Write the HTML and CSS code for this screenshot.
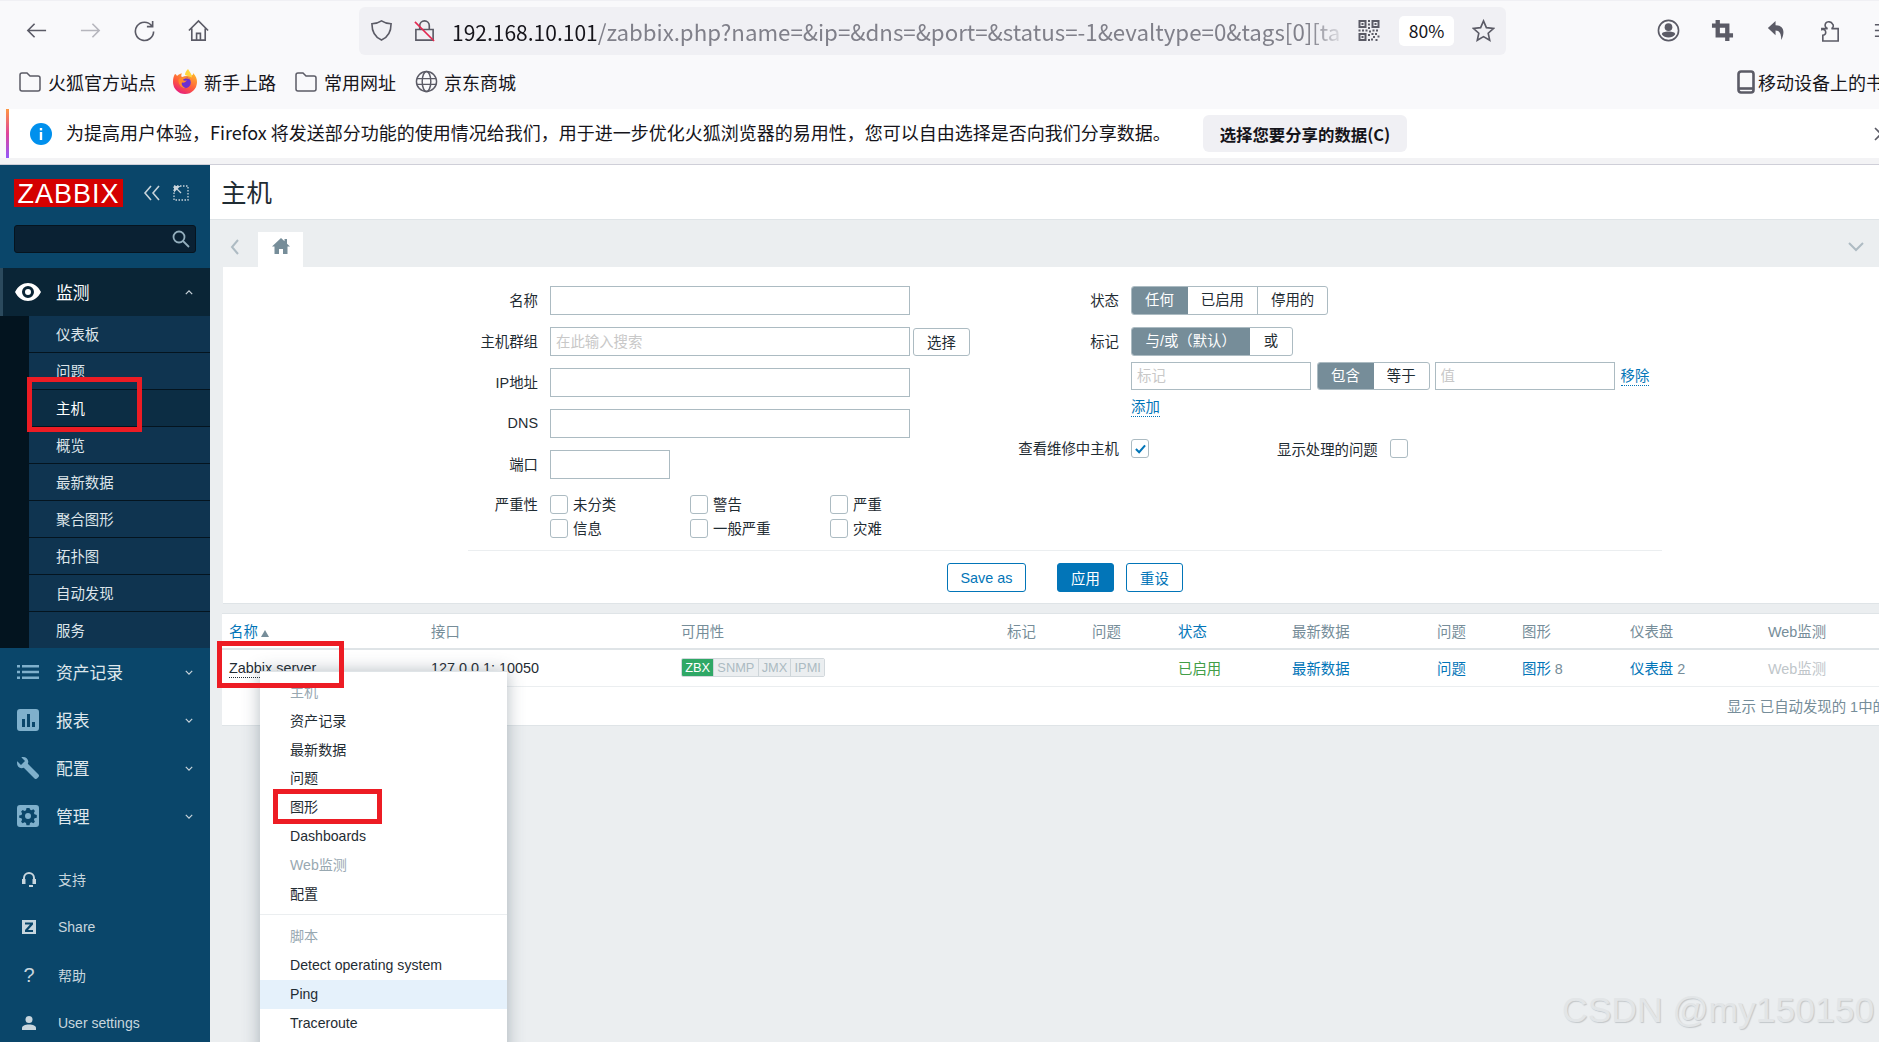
FILE: index.html
```html
<!DOCTYPE html>
<html lang="zh-CN">
<head>
<meta charset="utf-8">
<title>主机</title>
<link rel="stylesheet" href="styles.css">
</head>
<body>
<header class="toolbar">
  <svg class="ti" viewBox="0 0 24 24"><path d="M22 12H3M10 5l-7 7 7 7"/></svg>
  <svg class="ti ti-off" viewBox="0 0 24 24"><path d="M2 12h19M14 5l7 7-7 7"/></svg>
  <svg class="ti" viewBox="0 0 24 24"><path d="M19.5 7A9.5 9.5 0 1 0 21.5 13M20.5 2v6h-6"/></svg>
  <svg class="ti" viewBox="0 0 24 24"><path d="M2 12 12 2l10 10M5 10v12h14V10M10 22v-7h4v7"/></svg>
  <div class="urlbar">
    <svg class="ti" viewBox="0 0 24 24"><path d="M12 2c3 2 6 3 10 3 0 9-3 14-10 17C5 19 2 14 2 5c4 0 7-1 10-3z"/></svg>
    <svg class="ti ti-lock" viewBox="0 0 24 24"><path d="M7 11V7a5 5 0 0 1 10 0v4M3 11h18v11H3z"/><path class="slash" d="M2 3l20 20"/></svg>
    <div class="url"><span class="url-host">192.168.10.101</span>/zabbix.php?name=&amp;ip=&amp;dns=&amp;port=&amp;status=-1&amp;evaltype=0&amp;tags[0][ta</div>
    <svg class="qr" viewBox="0 0 21 21"><path fill-rule="evenodd" d="M0 0h8v8H0zM2 2v4h4V2zM13 0h8v8h-8zM15 2v4h4V2zM0 13h8v8H0zM2 15v4h4v-4zM3 3h2v2H3zM16 3h2v2h-2zM3 16h2v2H3zM9.500 0h2v2h-2zM9.500 3.500h2v2h-2zM9.500 7h2v2h-2zM0 9.500h2v2H0zM3.500 9.500h2v2h-2zM7 9.500h2v2H7zM10.500 10.500h2v2h-2zM14 9.500h2v2h-2zM17.500 9.500h2v2h-2zM9.500 14h2v2h-2zM13 13h2v2h-2zM16.500 13h2v2h-2zM19 15.500h2v2h-2zM14.500 16h2v2h-2zM9.500 19h2v2h-2zM12.500 18.500h2v2h-2zM17 19h2v2h-2z"/></svg>
    <div class="zoompill">80%</div>
    <svg class="ti ti-star" viewBox="0 0 24 24"><path d="M12 2l3 7 7.500 .8-5.600 5 1.600 7.400L12 18.400 5.500 22.200 7.100 14.800 1.500 9.800 9 9z"/></svg>
  </div>
  <svg class="ti ti-acct" viewBox="0 0 24 24"><circle cx="12" cy="12" r="10.500"/><circle class="solid" cx="12" cy="8.500" r="4"/><path class="solid" d="M5 16c0-2 3-3 7-3s7 1 7 3c-3 4.500-11 4.500-14 0z"/></svg>
  <svg class="ti ti-bold" viewBox="0 0 24 24"><path d="M7 1v16h16M1 7h16v16"/></svg>
  <svg class="ti ti-fill" viewBox="0 0 24 24"><path d="M11 2 3 9.500l8 7.500v-5c4 0 6 3 6 10 4-8 3-15.500-6-15.500z"/></svg>
  <svg class="ti" viewBox="0 0 24 24"><path d="M3 10h6a3.500 3.500 0 0 1 2-7 3.500 3.500 0 0 1 3 2 3 3 0 0 1-1 5h7v13H4v-6a3 3 0 0 0 3-3 3 3 0 0 0-4-3z"/></svg>
  <svg class="ti" viewBox="0 0 24 24"><path d="M2 6h20M2 12h20M2 18h20"/></svg>
</header>

<nav class="bookmarks">
  <svg class="bi" viewBox="0 0 22 20"><path d="M1 3a2 2 0 0 1 2-2h5l3 3h8a2 2 0 0 1 2 2v11a2 2 0 0 1-2 2H3a2 2 0 0 1-2-2z"/></svg>
  <span class="bt">火狐官方站点</span>
  <svg class="bi bi-fox" viewBox="0 0 24 25"><defs><linearGradient id="foxg" x1="0.800" y1="0" x2="0.200" y2="1"><stop offset="0" stop-color="#ffb52b"/><stop offset=".55" stop-color="#ff5a3c"/><stop offset="1" stop-color="#e31587"/></linearGradient></defs><path fill="url(#foxg)" d="M2 5c1 0 1.500 1 2 2 2-2 4-2.500 5-2.500-1 1.500-1 3 0 3.500 6-2 12 0 11-4 3 3 4 6 4 9a12 12 0 0 1-24 0C0 10 .5 7 2 5z"/><path class="fox-a" d="M15 0c-2 2-3 4-3 6l7 2.500C19 5 16.500 3 15 0z"/><circle class="fox-b" cx="12" cy="13.500" r="5.800"/><path class="fox-c" d="M5.500 10.500c3-4 9-3.500 11.500 0-3-1.500-6-1-7 .5 1 1 3 1 4 0-1 2-3 3-5 2.500-1 2 1 5 4 5.500-4 1-8-3-7.500-8.500z"/></svg>
  <span class="bt">新手上路</span>
  <svg class="bi bi-3" viewBox="0 0 22 20"><path d="M1 3a2 2 0 0 1 2-2h5l3 3h8a2 2 0 0 1 2 2v11a2 2 0 0 1-2 2H3a2 2 0 0 1-2-2z"/></svg>
  <span class="bt">常用网址</span>
  <svg class="bi bi-4" viewBox="0 0 24 24"><circle cx="12" cy="12" r="10.500"/><ellipse cx="12" cy="12" rx="4.500" ry="10.500"/><path d="M2 9h20M2 15h20"/></svg>
  <span class="bt">京东商城</span>
  <svg class="bi-mobile" viewBox="0 0 18 24"><rect x="1.500" y="1.500" width="15" height="21" rx="2.500"/><path d="M1.500 18.500h15"/></svg>
  <span class="bt bt-mobile">移动设备上的书签</span>
</nav>

<section class="infobar">
  <svg class="info-i" viewBox="0 0 22 22"><circle cx="11" cy="11" r="11"/><rect x="9.800" y="9" width="2.400" height="8" fill="#fff"/><rect x="9.800" y="5" width="2.400" height="2.400" fill="#fff"/></svg>
  <p class="info-text">为提高用户体验，Firefox 将发送部分功能的使用情况给我们，用于进一步优化火狐浏览器的易用性，您可以自由选择是否向我们分享数据。</p>
  <button class="info-btn">选择您要分享的数据(C)</button>
  <svg class="info-x" viewBox="0 0 14 14"><path d="M1 1l12 12M13 1 1 13"/></svg>
</section>
<div class="infogap"></div>

<div class="app">
  <aside class="sidebar">
    <div class="logo-row">
      <div class="logo">ZABBIX</div>
      <svg class="collapse" viewBox="0 0 18 18"><path d="M8 2 2 9l6 7M16 2l-6 7 6 7"/></svg>
      <svg class="expand" viewBox="0 0 16 16"><rect class="dots" x="1" y="1" width="14" height="14"/><path class="arrow" d="M1 1h6.500L1 7.500z"/><path d="M3 3l5 5"/></svg>
    </div>
    <div class="side-search"><svg viewBox="0 0 18 18"><circle cx="7" cy="7" r="5.500"/><path d="M11 11l6 6"/></svg></div>
    <div class="menu-head menu-open">
      <svg class="mi mi-eye" viewBox="0 0 26 18"><path class="white" fill-rule="evenodd" d="M0 9C3 3 8 0 13 0s10 3 13 9c-3 6-8 9-13 9S3 15 0 9zm13 6a6 6 0 1 0 0-12 6 6 0 0 0 0 12zm0-3a3 3 0 1 1 0-6 3 3 0 0 1 0 6z"/></svg>
      <span class="ml ml-on">监测</span>
      <svg class="chev" viewBox="0 0 10 6"><path d="M1 5l4-4 4 4"/></svg>
    </div>
    <ul class="submenu">
      <li>仪表板</li><li>问题</li><li class="sub-on">主机</li><li>概览</li><li>最新数据</li><li>聚合图形</li><li>拓扑图</li><li>自动发现</li><li>服务</li>
    </ul>
    <div class="menu-head">
      <svg class="mi" viewBox="0 0 22 14"><path d="M0 0h3v2.500H0zM5 0h17v2.500H5zM0 5.700h3v2.500H0zM5 5.700h17v2.500H5zM0 11.500h3V14H0zM5 11.500h17V14H5z"/></svg>
      <span class="ml">资产记录</span>
      <svg class="chev" viewBox="0 0 10 6"><path d="M1 1l4 4 4-4"/></svg>
    </div>
    <div class="menu-head">
      <svg class="mi" viewBox="0 0 22 22"><path fill-rule="evenodd" d="M3 0h16a3 3 0 0 1 3 3v16a3 3 0 0 1-3 3H3a3 3 0 0 1-3-3V3a3 3 0 0 1 3-3zm2 10v8h3v-8zm5-5v13h3V5zm5 8v5h3v-5z"/></svg>
      <span class="ml">报表</span>
      <svg class="chev" viewBox="0 0 10 6"><path d="M1 1l4 4 4-4"/></svg>
    </div>
    <div class="menu-head">
      <svg class="mi" viewBox="0 0 22 22"><path d="M6 0c3 0 5 2 5.300 4.500 0 1-.2 1.800-.5 2.300L21.500 17.500c.7.700.7 1.800 0 2.500l-1.500 1.500c-.7.700-1.800.7-2.500 0L6.800 10.800c-.5.300-1.300.5-2.300.5C2 11 0 9 0 6c0-.6.100-1.200.3-1.700L4 8l4-4L4.300.3C4.800.1 5.400 0 6 0z"/></svg>
      <span class="ml">配置</span>
      <svg class="chev" viewBox="0 0 10 6"><path d="M1 1l4 4 4-4"/></svg>
    </div>
    <div class="menu-head">
      <svg class="mi" viewBox="0 0 22 22"><path fill-rule="evenodd" d="M3 0h16a3 3 0 0 1 3 3v16a3 3 0 0 1-3 3H3a3 3 0 0 1-3-3V3a3 3 0 0 1 3-3zm6.500 3-.5 2.200-1.400.7-2-1-1.500 1.600 1 2-.6 1.400-2.300.6v2.200l2.300.6.6 1.400-1 2 1.500 1.600 2-1 1.400.6.500 2.300h3l.5-2.300 1.400-.6 2 1 1.500-1.600-1-2 .6-1.400 2.300-.6V9.900l-2.300-.6-.6-1.400 1-2-1.500-1.600-2 1-1.400-.7L12.500 3zM11 8a3 3 0 1 1 0 6 3 3 0 0 1 0-6z"/></svg>
      <span class="ml">管理</span>
      <svg class="chev" viewBox="0 0 10 6"><path d="M1 1l4 4 4-4"/></svg>
    </div>
    <div class="side-foot">
      <div class="foot-row">
        <svg class="fi" viewBox="0 0 14 16"><path class="ln" d="M2 9V7a5 5 0 0 1 10 0v2"/><path d="M0 8h3.500v5H0zM10.500 8H14v5h-3.500zM7 14h4v2H7z"/></svg>
        <span>支持</span>
      </div>
      <div class="foot-row">
        <svg class="fi" viewBox="0 0 14 14"><path fill-rule="evenodd" d="M0 0h14v14H0zM3 2.500v2h5L3 10v2h8v-2H6l5-5.500v-2z"/></svg>
        <span>Share</span>
      </div>
      <div class="foot-row">
        <span class="fi fi-q">?</span>
        <span>帮助</span>
      </div>
      <div class="foot-row">
        <svg class="fi" viewBox="0 0 14 14"><circle cx="7" cy="3.500" r="3.500"/><path d="M0 14v-2c0-2 3-3.500 7-3.500s7 1.500 7 3.500v2z"/></svg>
        <span>User settings</span>
      </div>
    </div>
  </aside>

  <main class="main">
    <div class="page-head"><h1>主机</h1></div>
    <div class="content">
      <div class="tabs">
        <svg class="tab-prev" viewBox="0 0 10 16"><path d="M8 1 2 8l6 7"/></svg>
        <div class="tab-home"><svg viewBox="0 0 18 16"><path d="M9 0 0 8.500h2.500V16h4.500v-5h4v5h4.500V8.500H18l-3-2.800V1h-2.500v2.300z"/></svg></div>
        <svg class="tab-next" viewBox="0 0 16 10"><path d="M1 1l7 7 7-7"/></svg>
      </div>

      <section class="filter">
        <div class="filter-form">
          <div class="fcol">
            <div class="frow"><label>名称</label><input class="field"></div>
            <div class="frow"><label>主机群组</label><input class="field" placeholder="在此输入搜索"><button class="btn-sel">选择</button></div>
            <div class="frow"><label>IP地址</label><input class="field"></div>
            <div class="frow"><label>DNS</label><input class="field"></div>
            <div class="frow"><label>端口</label><input class="field field-s"></div>
            <div class="frow frow-sev"><label>严重性</label>
              <div class="sev">
                <span class="ck-item"><i class="ck"></i>未分类</span>
                <span class="ck-item"><i class="ck"></i>警告</span>
                <span class="ck-item"><i class="ck"></i>严重</span>
                <span class="ck-item"><i class="ck"></i>信息</span>
                <span class="ck-item"><i class="ck"></i>一般严重</span>
                <span class="ck-item"><i class="ck"></i>灾难</span>
              </div>
            </div>
          </div>
          <div class="fcol fcol-r">
            <div class="frow"><label>状态</label><div class="seg"><span class="on">任何</span><span>已启用</span><span>停用的</span></div></div>
            <div class="frow"><label>标记</label><div class="seg seg-logic"><span class="on">与/或（默认）</span><span>或</span></div></div>
            <div class="frow frow-tag"><label></label>
              <input class="field field-t" placeholder="标记">
              <div class="seg seg-t"><span class="on">包含</span><span>等于</span></div>
              <input class="field field-t" placeholder="值">
              <a class="link link-rm">移除</a>
            </div>
            <div class="frow frow-add"><label></label><a class="link">添加</a></div>
            <div class="frow frow-chk"><label>查看维修中主机</label>
              <i class="ck ck-on"><svg viewBox="0 0 12 10"><path d="M1 5l3.500 3.500L11 1"/></svg></i>
              <span class="chk-label">显示处理的问题</span><i class="ck"></i>
            </div>
          </div>
        </div>
        <div class="filter-foot">
          <button class="btn">Save as</button>
          <button class="btn btn-pri">应用</button>
          <button class="btn">重设</button>
        </div>
      </section>

      <section class="results">
        <div class="grid grid-head">
          <span class="hl">名称<i class="sort"></i></span><span>接口</span><span>可用性</span><span>标记</span><span>问题</span><span class="hl">状态</span><span>最新数据</span><span>问题</span><span>图形</span><span>仪表盘</span><span>Web监测</span>
        </div>
        <div class="grid grid-row">
          <span><a class="host">Zabbix server</a></span>
          <span>127.0.0.1: 10050</span>
          <span class="avail"><b class="zbx">ZBX</b><b>SNMP</b><b>JMX</b><b>IPMI</b></span>
          <span></span><span></span>
          <span class="ok">已启用</span>
          <span class="hl">最新数据</span>
          <span class="hl">问题</span>
          <span><span class="hl">图形</span> <em>8</em></span>
          <span><span class="hl">仪表盘</span> <em>2</em></span>
          <span class="off">Web监测</span>
        </div>
        <div class="paging">显示 已自动发现的 1中的1</div>
      </section>
    </div>
  </main>
</div>

<div class="popup">
  <div class="pi pi-head">主机</div>
  <div class="pi">资产记录</div>
  <div class="pi">最新数据</div>
  <div class="pi">问题</div>
  <div class="pi">图形</div>
  <div class="pi">Dashboards</div>
  <div class="pi pi-head">Web监测</div>
  <div class="pi">配置</div>
  <div class="pi-sep"></div>
  <div class="pi pi-head">脚本</div>
  <div class="pi">Detect operating system</div>
  <div class="pi pi-hover">Ping</div>
  <div class="pi">Traceroute</div>
</div>

<div class="mark mark-host"></div>
<div class="mark mark-server"></div>
<div class="mark mark-graph"></div>
<div class="watermark">CSDN @my150150</div>
</body>
</html>
```

FILE: styles.css
```css
* { box-sizing: border-box; }
html, body { margin: 0; height: 1042px; overflow: hidden; }
body {
  width: 1879px;
  display: flex;
  flex-direction: column;
  background: #f9f9fb;
  color: #1f2c33;
  font-family: "Liberation Sans", "Noto Sans CJK SC", sans-serif;
  font-size: 14.4px;
  position: relative;
}

/* browser toolbar */
.toolbar { height: 60px; flex: none; display: flex; align-items: center; gap: 31px; padding: 6px 0 6px 25px; border-top: 1px solid #f0f0f4; }
.ti { width: 23px; height: 23px; flex: none; fill: none; stroke: #5b5b66; stroke-width: 1.7; }
.ti-off { stroke: #b6b6bd; }
.ti-bold { stroke-width: 4.5; }
.ti-fill { fill: #5b5b66; stroke: none; }
.ti-acct { margin-left: 120px; }
.solid { fill: #5b5b66; stroke: none; }
.urlbar { width: 1147px; height: 48px; flex: none; margin-left: 118px; background: #f0f0f4; border-radius: 6px; display: flex; align-items: center; padding-left: 11px; }
.ti-lock { margin-left: 20px; }
.slash { stroke: #e22850; }
.url { width: 894px; flex: none; margin-left: 16px; white-space: nowrap; overflow: hidden; font: 22.3px "Noto Sans CJK SC", sans-serif; color: #80808a; -webkit-mask-image: linear-gradient(to right, #000 96%, transparent); mask-image: linear-gradient(to right, #000 96%, transparent); }
.url-host { color: #15141a; font-size: 21px; }
.qr { width: 22px; height: 21px; flex: none; margin-left: 12px; fill: #5b5b66; }
.zoompill { width: 55px; height: 30px; flex: none; margin-left: 19px; background: #fff; border-radius: 5px; text-align: center; font: 17.5px/30px "Noto Sans CJK SC", sans-serif; color: #15141a; }
.ti-star { margin-left: 18px; }

/* bookmarks */
.bookmarks { height: 49px; flex: none; display: flex; align-items: center; padding: 0 0 6px 19px; font: 18px "Noto Sans CJK SC", sans-serif; color: #15141a; white-space: nowrap; }
.bi { width: 22px; height: 20px; flex: none; fill: none; stroke: #5b5b66; stroke-width: 1.5; margin-right: 7px; }
.bi-fox { width: 24px; height: 25px; margin-left: 17px; margin-right: 7px; stroke: none; }
.fox-a { fill: #ffd53d; }
.fox-b { fill: #6a2fd0; }
.fox-c { fill: #ff8a2b; }
.bi-3 { margin-left: 19px; }
.bi-4 { width: 23px; height: 23px; margin-left: 19px; margin-right: 6px; }
.bi-mobile { width: 18px; height: 24px; flex: none; margin-left: 1221px; fill: none; stroke: #5b5b66; stroke-width: 2.6; }
.bt { flex: none; }
.bt-mobile { margin-left: 3px; }

/* info bar */
.infobar { height: 49px; flex: none; margin-left: 6px; display: flex; align-items: center; background: #fff; border-left: 3px solid; border-image: linear-gradient(#ff9a3d, #e0439a, #9059ff) 1; font: 18px "Noto Sans CJK SC", sans-serif; color: #15141a; white-space: nowrap; }
.info-i { width: 22px; height: 22px; flex: none; margin-left: 21px; fill: #0090ed; }
.info-text { width: 1137px; flex: none; margin: 0 0 3px 14px; }
.info-btn { width: 204px; height: 37px; flex: none; border: 0; border-radius: 6px; background: #f0f0f4; font: bold 16.4px "Noto Sans CJK SC", sans-serif; color: #15141a; padding: 0; }
.info-x { width: 14px; height: 14px; flex: none; margin-left: 467px; fill: none; stroke: #5b5b66; stroke-width: 1.6; }
.infogap { height: 7px; flex: none; background: #f3f3f5; border-bottom: 1px solid #cfcfd8; }

/* zabbix layout */
.app { flex: 1; min-height: 0; display: flex; background: #ebeef0; }
.sidebar { width: 210px; flex: none; background: #0a466a; color: #f2f2f2; display: flex; flex-direction: column; }
.logo-row { height: 42px; flex: none; padding: 14px 0 0 14px; display: flex; align-items: center; }
.logo { width: 109px; height: 28px; background: #d40000; color: #fff; font-size: 27px; line-height: 30px; text-align: center; letter-spacing: 1px; }
.collapse { width: 18px; height: 18px; flex: none; margin-left: 20px; fill: none; stroke: #c9d4db; stroke-width: 1.6; }
.expand { width: 16px; height: 16px; flex: none; margin-left: 12px; fill: none; stroke: #c9d4db; stroke-width: 1.3; }
.dots { stroke-dasharray: 1.500 1.500; }
.arrow { fill: #c9d4db; stroke: none; }
.side-search { width: 182px; height: 28px; flex: none; margin: 18px 0 15px 14px; background: #0a2133; border: 1px solid #06141f; border-radius: 3px; display: flex; justify-content: flex-end; align-items: center; padding-right: 5px; }
.side-search svg { width: 18px; height: 18px; fill: none; stroke: #93aebd; stroke-width: 1.8; }
.menu-head { height: 48px; flex: none; display: flex; align-items: center; padding-left: 17px; }
.menu-open { background: #0a2536; border-left: 3px solid #2b4a5d; padding-left: 12px; }
.mi { width: 22px; height: 22px; flex: none; fill: #7fb0cc; margin-right: 17px; }
.mi-eye { width: 26px; height: 24px; margin-right: 15px; }
.mi .white { fill: #fff; }
.ml { flex: 1; font-size: 16.8px; color: #dfe7ec; }
.ml-on { color: #fff; }
.chev { width: 8px; height: 5px; flex: none; margin-right: 17px; fill: none; stroke: #c9d4db; stroke-width: 1.5; }
.submenu { list-style: none; margin: 0; padding: 0 0 0 29px; background: #03141f; flex: none; }
.submenu li { height: 37px; padding: 0 0 0 27px; line-height: 39px; background: #0f3450; border-bottom: 1px solid #04141f; color: #dde5ea; overflow: hidden; }
.submenu li:last-child { border-bottom: 0; height: 36px; }
.submenu .sub-on { background: #0c2d44; color: #fff; }
.side-foot { margin-top: 15px; flex: none; }
.foot-row { height: 48px; display: flex; align-items: center; padding-left: 22px; color: #c8d6de; font-size: 14px; }
.fi { width: 14px; height: 16px; flex: none; margin-right: 22px; fill: #c8d6de; }
.fi .ln { fill: none; stroke: #c8d6de; stroke-width: 2; }
.fi-q { font-size: 20px; line-height: 16px; text-align: center; }

.main { flex: 1; min-width: 0; display: flex; flex-direction: column; }
.page-head { height: 55px; flex: none; background: #fff; border-bottom: 1px solid #dfe4e7; padding-left: 11px; }
.page-head h1 { margin: 0; font-size: 25.5px; font-weight: 400; line-height: 56px; }
.content { flex: 1; padding-left: 13px; background: #ebeef0; }
.tabs { height: 47px; display: flex; align-items: flex-end; }
.tab-prev { width: 10px; height: 16px; flex: none; margin: 0 18px 12px 7px; fill: none; stroke: #aebbc3; stroke-width: 2; }
.tab-home { width: 45px; height: 35px; flex: none; background: #fff; display: flex; justify-content: center; padding-top: 6px; }
.tab-home svg { width: 18px; height: 16px; fill: #768d99; }
.tab-next { width: 16px; height: 10px; flex: none; margin: 0 15px 15px auto; fill: none; stroke: #aebbc3; stroke-width: 2; }

/* filter */
.filter { height: 337px; background: #fff; border-bottom: 1px solid #dfe4e7; padding-top: 19px; }
.filter-form { height: 264px; display: flex; }
.fcol { width: 760px; flex: none; }
.fcol-r { width: auto; flex: 1; }
.frow { display: flex; align-items: center; height: 29px; margin-bottom: 12px; white-space: nowrap; }
.frow label { width: 315px; flex: none; text-align: right; padding-bottom: 2px; margin-right: 12px; }
.fcol-r label { width: 136px; }
.field { width: 360px; height: 29px; flex: none; border: 1px solid #acbbc2; background: #fff; padding: 0 5px; margin: 0; font: inherit; border-radius: 0; outline: 0; }
.field::placeholder { color: #c8c8c8; opacity: 1; }
.field-s { width: 120px; }
.field-t { width: 180px; height: 28px; }
.btn-sel { width: 57px; height: 28px; flex: none; margin-left: 3px; background: #fff; border: 1px solid #acbbc2; border-radius: 3px; font: inherit; color: #1f2c33; padding: 0; }
.frow-sev { height: auto; margin-top: 16px; align-items: flex-start; margin-bottom: 0; }
.frow-sev label { margin-top: -2px; }
.sev { display: grid; grid-template-columns: repeat(3, 140px); row-gap: 5px; }
.ck-item { display: flex; align-items: center; height: 19px; padding-bottom: 2px; }
.ck { width: 18px; height: 19px; flex: none; display: flex; align-items: center; justify-content: center; border: 1px solid #acbbc2; border-radius: 3px; margin: 2px 5px 0 0; background: #fff; }
.ck svg { width: 11px; height: 10px; fill: none; stroke: #0275b8; stroke-width: 2.2; }
.seg { display: flex; height: 29px; flex: none; border: 1px solid #acbbc2; border-radius: 3px; overflow: hidden; line-height: 27px; }
.seg span { padding: 0 13px; border-right: 1px solid #acbbc2; }
.seg span:last-child { border-right: 0; }
.seg .on { background: #768d99; color: #fff; border-color: #768d99; }
.seg-logic span { padding: 0 13.500px; }
.seg-t { height: 28px; margin: 0 5px 0 6px; line-height: 26px; }
.link { color: #0275b8; border-bottom: 1px dotted #0275b8; line-height: 18px; }
.link-rm { margin-left: 6px; }
.frow-tag { height: 28px; margin: -6px 0 0; }
.frow-add { height: 18px; margin: 8px 0 0; }
.frow-chk { height: 19px; margin: 23px 0 0; }
.frow-chk .ck { margin: 0; }
.chk-label { margin: 0 12px 0 128px; }
.filter-foot { border-top: 1px solid #ebeef0; margin-left: 245px; width: 1194px; padding: 12px 0 0 479px; display: flex; }
.btn { width: 57px; height: 29px; flex: none; margin-right: 12px; background: #fff; border: 1px solid #0275b8; border-radius: 3px; color: #0275b8; font: inherit; padding: 0; }
.btn:first-child { width: 79px; margin-right: 31px; }
.btn-pri { background: #0275b8; color: #fff; }

/* results */
.results { margin-top: 9px; height: 113px; background: #fff; border-top: 1px solid #dfe4e7; border-bottom: 1px solid #dfe4e7; margin-left: -1px; white-space: nowrap; }
.grid { display: grid; grid-template-columns: 202px 250px 326px 85px 86px 114px 145px 85px 108px 138px 1fr; padding-left: 7px; align-items: center; }
.grid-head { height: 36px; border-bottom: 2px solid #dfe4e7; color: #768d99; padding-bottom: 2px; }
.grid-row { height: 37px; border-bottom: 1px solid #ebeef0; padding-bottom: 1px; }
.hl { color: #0275b8; }
.sort { display: inline-block; width: 0; height: 0; margin-left: 3px; border: 4.500px solid transparent; border-top: 0; border-bottom: 7px solid #768d99; }
.host { border-bottom: 1px dotted #1f2c33; line-height: 17px; display: inline-block; margin-top: 2px; }
.avail { display: flex; width: 144px; height: 19px; border: 1px solid #d2d8dc; border-radius: 2px; overflow: hidden; font-size: 12.8px; }
.avail b { font-weight: 400; background: #ebeef0; color: #acbbc2; line-height: 17px; border-left: 1px solid #cdd5d9; padding: 0 3px; text-align: center; flex: auto; }
.avail .zbx { background: #2fa866; color: #fff; border-left: 0; }
.ok { color: #429e47; }
.off { color: #c0c6ca; }
em { font-style: normal; color: #768d99; }
.paging { padding-left: 1505px; line-height: 41px; color: #768d99; }

/* context menu, over the page */
.popup { position: absolute; left: 260px; top: 671px; width: 247px; height: 400px; padding-top: 6px; background: #fff; box-shadow: 0 0 16px rgba(60, 80, 95, .38); border-top: 1px solid #dfe4e7; white-space: nowrap; font-size: 14.1px; }
.pi { height: 28.800px; line-height: 28.800px; padding-left: 30px; }
.pi-head { color: #98a8b1; }
.pi-sep { height: 1px; margin: 6px 0 7px; background: #ebeef0; }
.pi-hover { background: #e5f1fb; }

/* annotations drawn on the screenshot */
.mark { position: absolute; border: 5px solid #ed1c24; }
.mark-host { left: 27px; top: 377px; width: 115px; height: 55px; }
.mark-server { left: 217px; top: 641px; width: 127px; height: 47px; }
.mark-graph { left: 273px; top: 789px; width: 109px; height: 35px; }
.watermark { position: absolute; left: 1562px; top: 989px; font-size: 35.500px; line-height: 42px; color: #e2e5e7; text-shadow: 1px 1px 1px #c3c7ca; white-space: nowrap; }
```
